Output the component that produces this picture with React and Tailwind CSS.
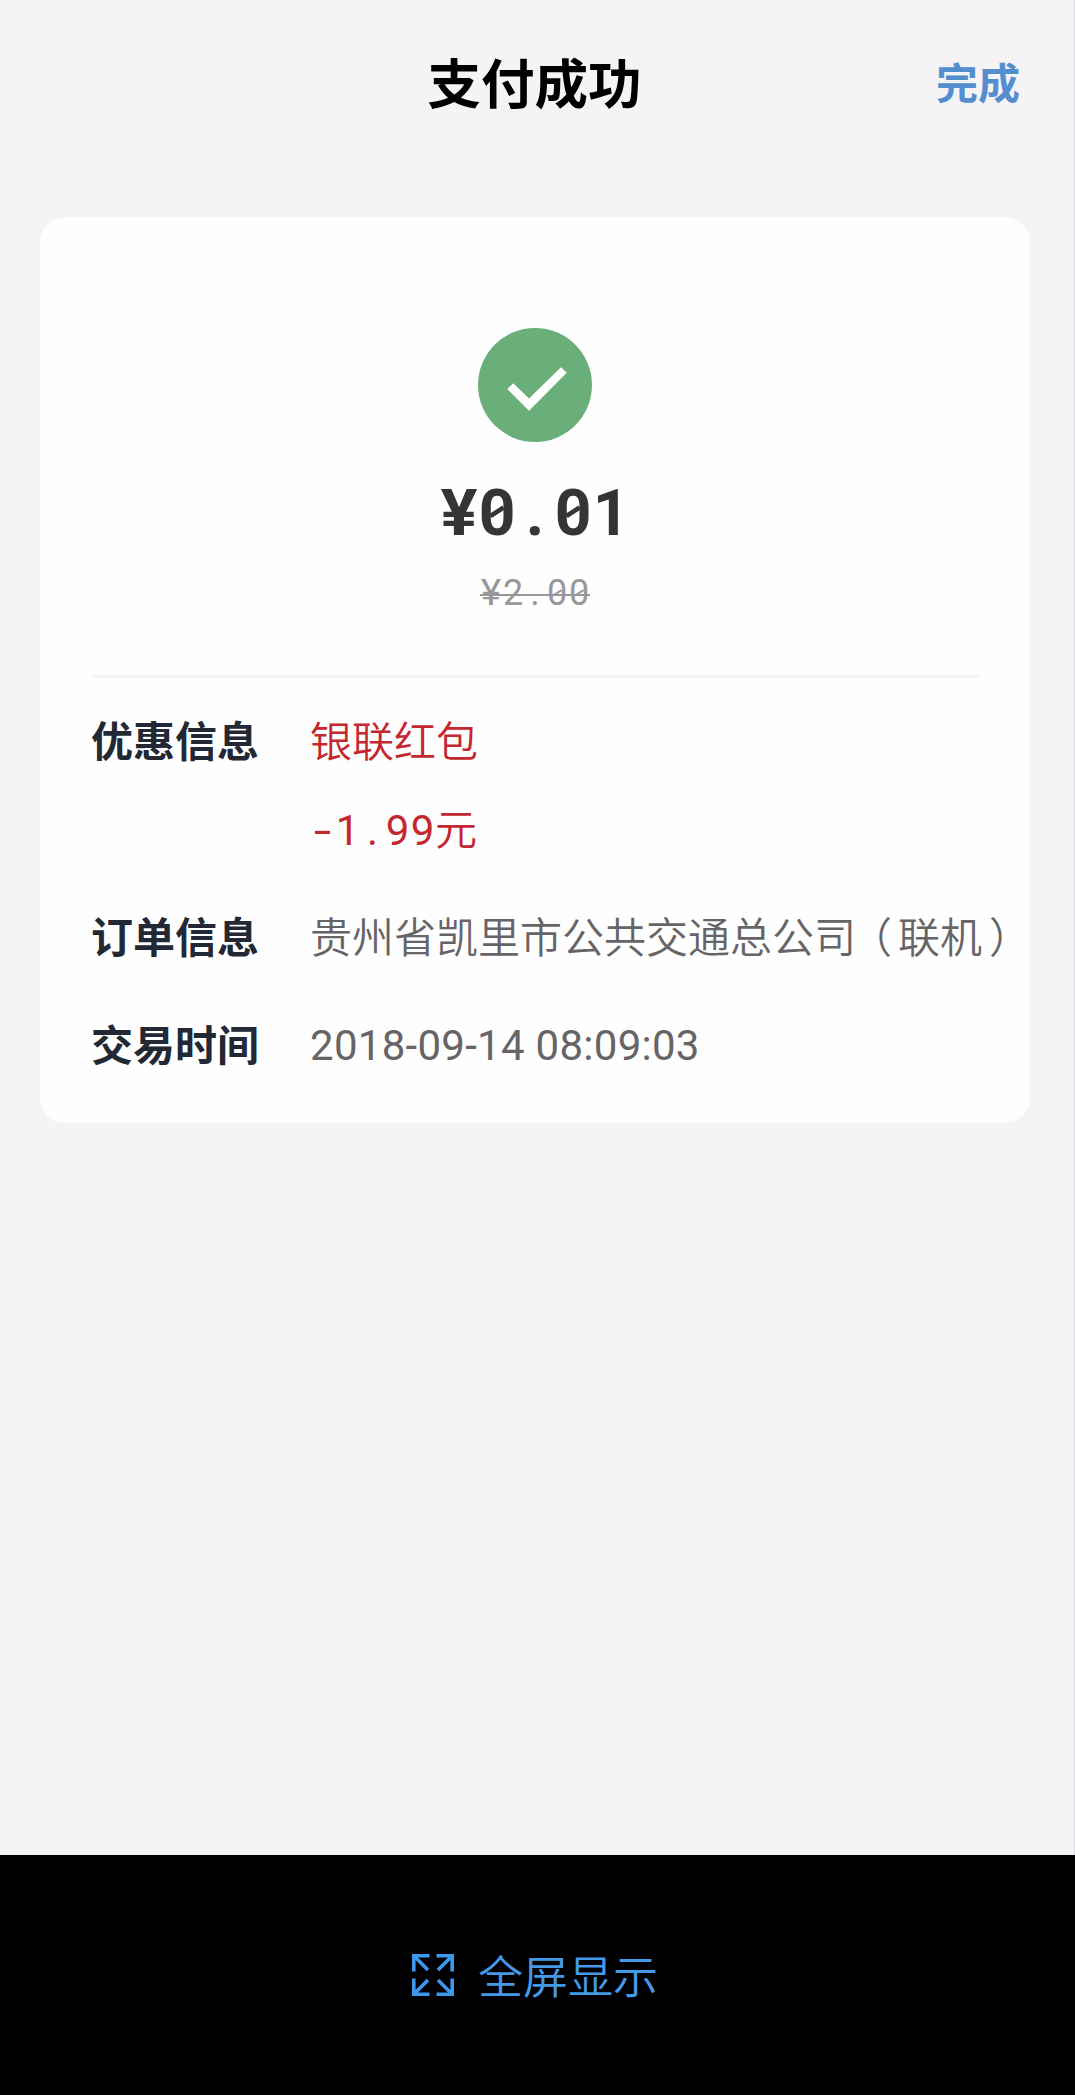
const CJK = "font-['Roboto','Noto_Sans_CJK_SC',sans-serif]";

function Zero({ className, slash }) {
  return (
    <span className={className}>
      0
      <svg viewBox="0 0 38 64" className="absolute inset-0 h-full w-full" fill="none" stroke="currentColor" aria-hidden="true">
        <path d={slash.d} strokeWidth={slash.width} />
      </svg>
    </span>
  );
}

const STRETCH = { "¥": "scale-x-[1.08]", "-": "scale-x-150" };

function MonoText({ text, cell, slash }) {
  return [...text].map((c, i) =>
    c === "0" ? (
      <Zero key={i} className={cell} slash={slash} />
    ) : (
      <span key={i} className={`${cell} ${STRETCH[c] ?? ""}`}>{c}</span>
    )
  );
}

function SuccessIcon() {
  return (
    <svg viewBox="0 0 114 114" className="h-[114px] w-[114px]" aria-hidden="true">
      <circle cx="57" cy="57" r="57" fill="#6aae79" />
      <path d="M29.3 61 35.3 55.2 51 70.4 83 39.2 88.8 44.8 51 82.7Z" fill="#fff" />
    </svg>
  );
}

function ExpandIcon() {
  return (
    <svg viewBox="0 0 42 42" className="h-[42px] w-[42px]" fill="none" stroke="#3b98ec" strokeWidth="3.6" aria-hidden="true">
      <path d="M17.5 1.8H1.8V17.5M1.8 1.8 16 16" />
      <path d="M24.5 1.8H40.2V17.5M40.2 1.8 26 16" />
      <path d="M1.8 24.5V40.2H17.5M1.8 40.2 16 26" />
      <path d="M40.2 24.5V40.2H24.5M40.2 40.2 26 26" />
    </svg>
  );
}

function Row({ label, children }) {
  return (
    <div className="flex leading-[60px]">
      <dt className="w-[219px] shrink-0 font-bold text-[#222834]">{label}</dt>
      <dd className="whitespace-nowrap text-[#666466]">{children}</dd>
    </div>
  );
}

export default function App() {
  return (
    <div className={`flex h-[2095px] w-[1075px] flex-col overflow-hidden bg-black ${CJK}`}>
      <main className="h-[1855px] border-r border-[#dcdbe0] bg-[#f5f3f6]">
        <header className="grid h-[217px] grid-cols-[1fr_auto_1fr] items-start pt-[46px] pr-[54px] pl-[49px]">
          <span />
          <h1 className="text-[53.5px] leading-[80px] font-bold text-black">支付成功</h1>
          <button className="justify-self-end text-[42px] leading-[78px] font-bold text-[#538fcf]">完成</button>
        </header>

        <section className="ml-10 h-[906px] w-[990px] rounded-[26px] bg-[#fefefe] pt-[111px]">
          <div className="flex flex-col items-center">
            <SuccessIcon />
            <p className="mt-[32px] flex h-20 text-[64px] leading-[80px] font-bold text-[#373438]">
              <MonoText
                text="¥0.01"
                cell="relative inline-block w-[38px] text-center"
                slash={{ d: "M12.5 34 25.5 25.5", width: 4.5 }}
              />
            </p>
            <p className="relative mt-[14px] flex h-[50px] text-[36px] leading-[50px] text-[#99979a]">
              <MonoText
                text="¥2.00"
                cell="relative inline-block w-[22px] text-center"
                slash={{ d: "M11 37 27 27", width: 3.5 }}
              />
              <span className="absolute top-[26px] left-0 h-0.5 w-full bg-[#99979a]" />
            </p>
          </div>

          <hr className="mx-[51px] mt-[57px] h-[3px] border-0 bg-[#f5f5f6]" />

          <dl className="pt-[35px] pl-[51px] text-[42px]">
            <Row label="优惠信息">
              <p className="font-[350] text-[#c5272f]">银联红包</p>
              <p className="mt-[28px] flex text-[#c5272f]">
                <MonoText text="-1.99" cell="relative inline-block w-[25px] text-center" />
                <span className="font-[350]">元</span>
              </p>
            </Row>
            <div className="mt-[48px]">
              <Row label="订单信息">
                <span className="flex font-[350]">
                  <span>贵州省凯里市公共交通总公司</span>
                  <span className="w-[42px] pl-[15px] [font-feature-settings:'halt']">（</span>
                  <span>联机</span>
                  <span className="w-[42px] pl-[7px] [font-feature-settings:'halt']">）</span>
                </span>
              </Row>
            </div>
            <div className="mt-[48px]">
              <Row label="交易时间">
                <span className="block h-[59px] leading-[58px] tracking-[0.28px]">2018-09-14 08:09:03</span>
              </Row>
            </div>
          </dl>
        </section>
      </main>

      <footer className="flex h-60 items-center justify-center gap-[24px] pr-[5px] text-[#4499e8]">
        <ExpandIcon />
        <button className="mt-[7px] text-[45px] leading-[60px] font-[350]">全屏显示</button>
      </footer>
    </div>
  );
}
